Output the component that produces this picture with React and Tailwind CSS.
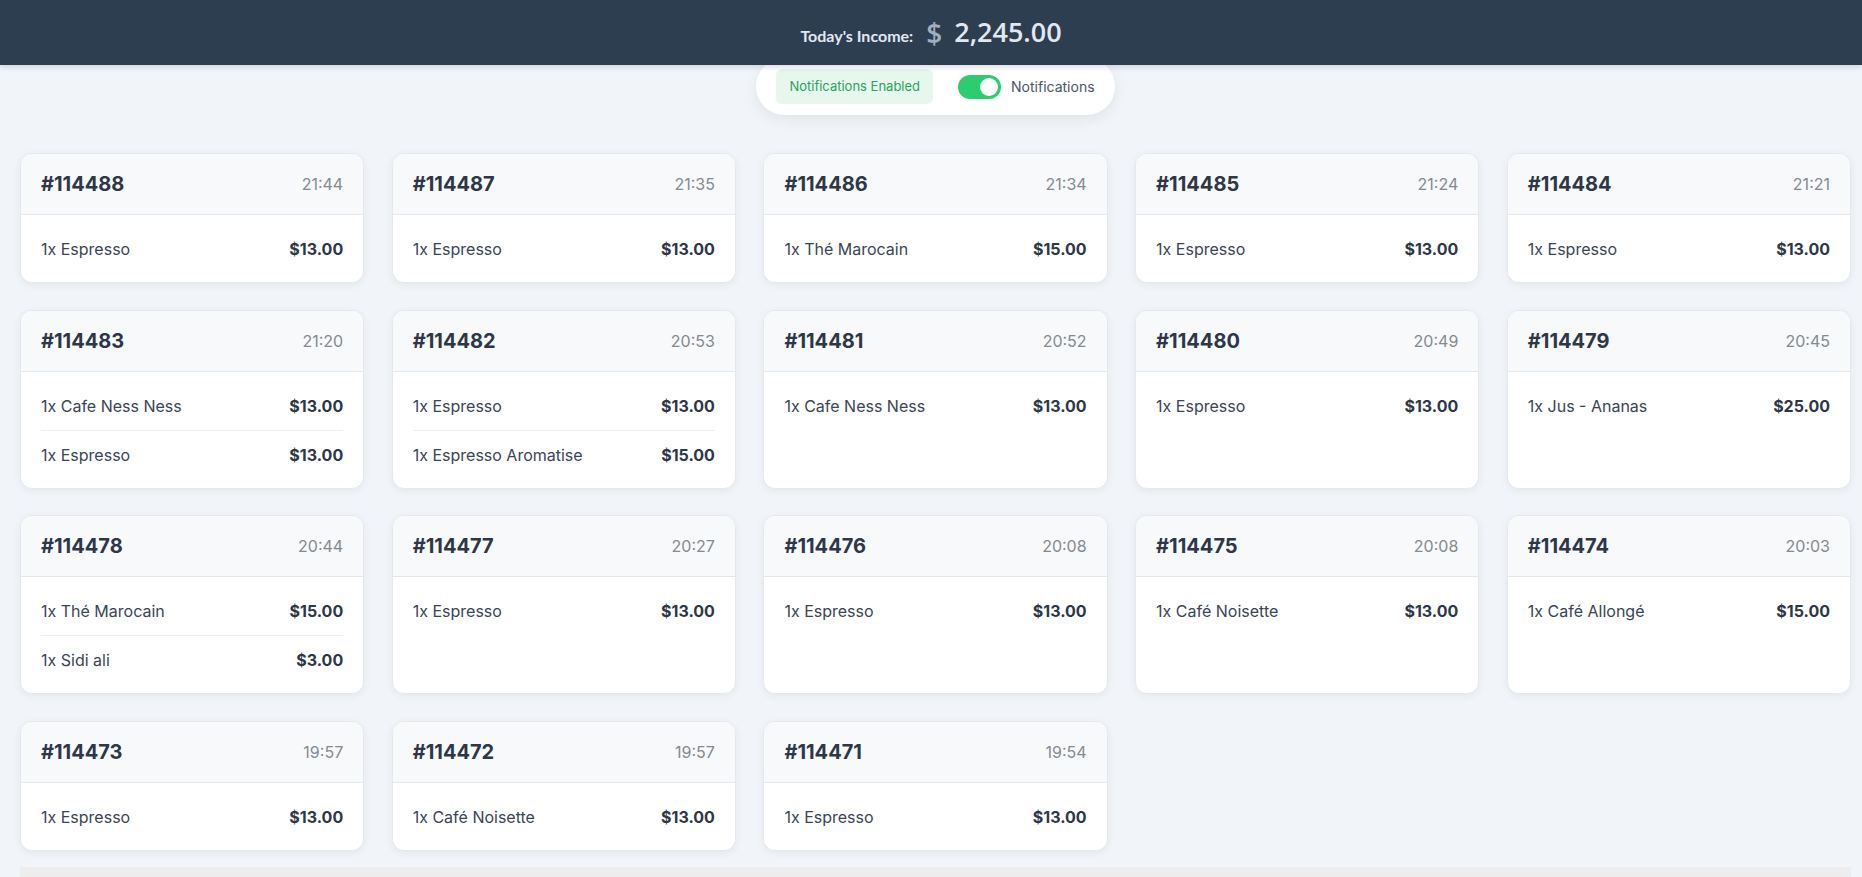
import React, { useState } from 'react';

const orders = [
  { id: 114488, time: '21:44', items: [['1x Espresso', '$13.00']] },
  { id: 114487, time: '21:35', items: [['1x Espresso', '$13.00']] },
  { id: 114486, time: '21:34', items: [['1x Thé Marocain', '$15.00']] },
  { id: 114485, time: '21:24', items: [['1x Espresso', '$13.00']] },
  { id: 114484, time: '21:21', items: [['1x Espresso', '$13.00']] },
  { id: 114483, time: '21:20', items: [['1x Cafe Ness Ness', '$13.00'], ['1x Espresso', '$13.00']] },
  { id: 114482, time: '20:53', items: [['1x Espresso', '$13.00'], ['1x Espresso Aromatise', '$15.00']] },
  { id: 114481, time: '20:52', items: [['1x Cafe Ness Ness', '$13.00']] },
  { id: 114480, time: '20:49', items: [['1x Espresso', '$13.00']] },
  { id: 114479, time: '20:45', items: [['1x Jus - Ananas', '$25.00']] },
  { id: 114478, time: '20:44', items: [['1x Thé Marocain', '$15.00'], ['1x Sidi ali', '$3.00']] },
  { id: 114477, time: '20:27', items: [['1x Espresso', '$13.00']] },
  { id: 114476, time: '20:08', items: [['1x Espresso', '$13.00']] },
  { id: 114475, time: '20:08', items: [['1x Café Noisette', '$13.00']] },
  { id: 114474, time: '20:03', items: [['1x Café Allongé', '$15.00']] },
  { id: 114473, time: '19:57', items: [['1x Espresso', '$13.00']] },
  { id: 114472, time: '19:57', items: [['1x Café Noisette', '$13.00']] },
  { id: 114471, time: '19:54', items: [['1x Espresso', '$13.00']] },
];

const OrderCard = ({ order }) => (
  <div className="bg-white rounded-xl border border-[#e5e9ef] shadow-[0_2px_8px_rgba(15,23,42,0.06)] overflow-hidden flex flex-col">
    {/* header */}
    <div className="flex items-center justify-between px-5 py-4 bg-[#f7f9fb] border-b border-[#e2e8f0]">
      <span className="text-xl leading-7 font-bold text-[#2d3748]">#{order.id}</span>
      <span className="text-base leading-7 text-[#858a8f]">{order.time}</span>
    </div>
    {/* items */}
    <div className="px-5 pt-[10px] pb-[9px]">
      {order.items.map(([name, price], i) => (
        <div
          key={i}
          className={`flex items-center justify-between py-3 text-base leading-6 ${i > 0 ? 'border-t border-[#edf0f3]' : ''}`}
        >
          <span className="text-[#3a4556]">{name}</span>
          <span className="font-bold text-[#2d3748]">{price}</span>
        </div>
      ))}
    </div>
  </div>
);

export default function App() {
  const [enabled, setEnabled] = useState(true);

  return (
    <div className="min-h-[877px] bg-[#f1f5f9] font-['Inter',sans-serif] flex flex-col">
      {/* Top bar */}
      <div className="relative z-10 h-[65px] bg-[#2d3e50] flex items-center justify-center gap-[13px] shadow-[0_2px_6px_rgba(0,0,0,0.15)]">
        <span className="font-['Lato',sans-serif] font-bold text-base text-[#e2e8f0] mt-[6px]">Today's Income:</span>
        <span className="font-['Open_Sans',sans-serif] font-semibold text-[28px] text-[#a0aec0]">$</span>
        <span className="font-['Open_Sans',sans-serif] font-semibold text-[27px] text-[#e2e8f0] -ml-[1px]">2,245.00</span>
      </div>

      {/* Notifications pill */}
      <div className="flex justify-center -mt-[7px] pl-5 pr-[11px]">
        <div className="flex items-center bg-white rounded-full shadow-[0_4px_14px_rgba(15,23,42,0.08)] pl-5 pr-5 pt-[11px] pb-[11px]">
          <span className="bg-[#e8f7ee] text-[#27a55c] text-[13px] rounded-md px-[13px] py-[8px] leading-[19px]">
            Notifications Enabled
          </span>
          <button
            onClick={() => setEnabled(!enabled)}
            className={`ml-[25px] w-[43px] h-[24px] rounded-full flex items-center px-[3px] ${enabled ? 'bg-[#2ecc71] justify-end' : 'bg-gray-300 justify-start'}`}
          >
            <span className="w-[18px] h-[18px] rounded-full bg-white block" />
          </button>
          <span className="ml-[10px] text-sm text-[#4a5568]">Notifications</span>
        </div>
      </div>

      {/* Orders grid */}
      <div className="grid grid-cols-5 gap-x-[27.5px] gap-y-[26.5px] pl-5 pr-[11px] mt-[38px]">
        {orders.map(order => (
          <OrderCard key={order.id} order={order} />
        ))}
      </div>

      {/* bottom bar */}
      <div className="mt-4 ml-5 mr-[11px] flex-1 min-h-[12px] bg-[#ededed]" />
    </div>
  );
}
